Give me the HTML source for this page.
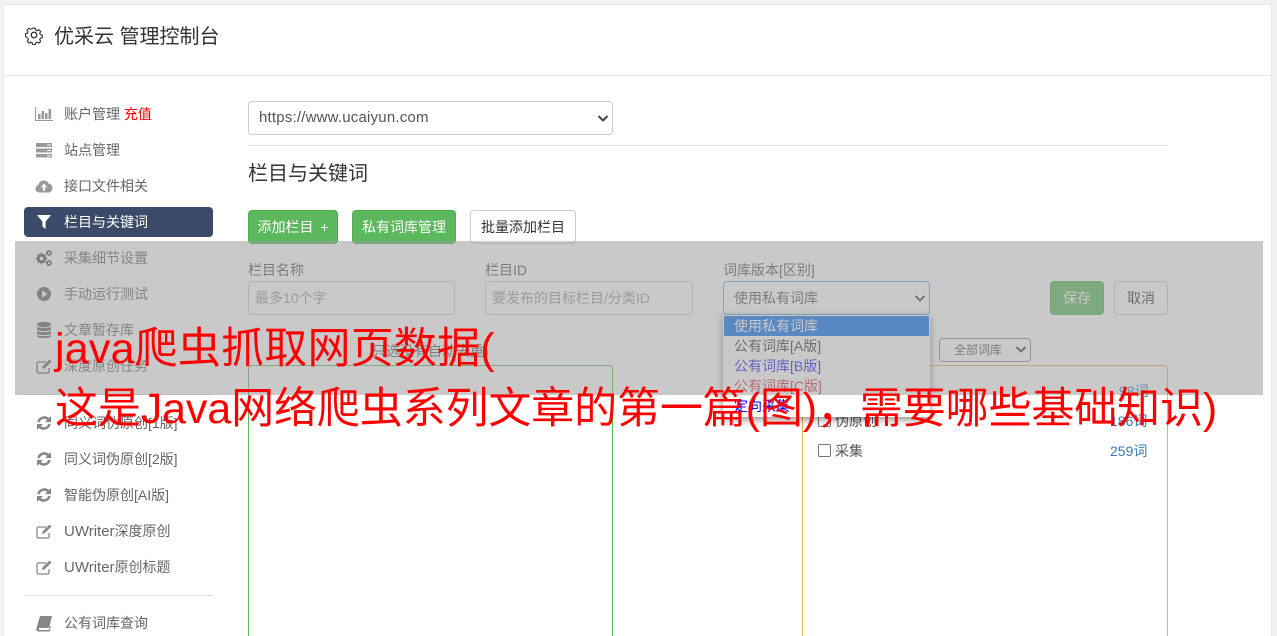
<!DOCTYPE html>
<html lang="zh"><head><meta charset="utf-8"><title>优采云 管理控制台</title>
<style>
html,body{margin:0;padding:0;width:1277px;height:636px;overflow:hidden}
body{background:#f1f1f1;font-family:"Liberation Sans","Noto Sans CJK SC",sans-serif;font-size:14px;color:#555}
#wrap{position:absolute;left:0;top:0;width:1277px;height:636px;overflow:hidden}
.a{position:absolute;white-space:nowrap}
.l{font-size:15px}
#card{left:3px;top:4px;width:1267px;height:640px;background:#fff;border:1px solid #e8e8e8;border-radius:3px}
.m{left:64px;height:20px;line-height:20px;color:#666}
.i{position:absolute;left:35px;width:18px;height:18px}
.hr{background:#e0e0e0;height:1px}
.box{box-sizing:border-box;border:1px solid #ccc;border-radius:4px;background:#fff}
.btn{box-sizing:border-box;height:34px;line-height:32px;text-align:center;border-radius:4px}
.g{background:#5cb85c;border:1px solid #4cae4c;color:#fff}
.w{background:#fff;border:1px solid #ccc;color:#333}
.lb{height:20px;line-height:20px;color:#555}
.in{box-sizing:border-box;height:34px;line-height:32px;padding-left:6px;color:#999}
.ch{position:absolute;left:818px;width:13px;height:13px;box-sizing:border-box;border:1px solid #767676;border-radius:2px;background:#fff}
.op{left:734px;height:20px;line-height:20px}
.big{left:55px;color:#f00;font-size:43px;height:60px;line-height:60px;z-index:5}
</style></head><body><div id="wrap">
<div class="a" id="card"></div>
<svg class="a" style="left:24px;top:25px" width="20" height="20" viewBox="0 0 20 20" fill="none" stroke="#333" stroke-width="1.300"><circle cx="10" cy="10" r="2.800"/><path d="M8.400 2h3.200l.5 2.300 1.600.7 2-1.200 2.200 2.200-1.200 2 .7 1.600 2.300.5v3.200l-2.300.5-.7 1.600 1.200 2-2.200 2.200-2-1.200-1.600.7-.5 2.300H8.400l-.5-2.300-1.600-.7-2 1.200-2.200-2.200 1.200-2-.7-1.600L0 11.600V8.400l2.300-.5.7-1.600-1.200-2 2.200-2.200 2 1.200 1.600-.7z" transform="translate(1.500 1.500) scale(.85)"/></svg>
<div class="a" style="left:54px;top:25px;height:24px;line-height:24px;font-size:20px;color:#333">优采云 管理控制台</div>
<div class="a hr" style="left:4px;top:75px;width:1267px;background:#e6e6e6"></div>

<svg class="i" style="top:105px" viewBox="0 0 18 18" fill="#999"><path d="M0 2h1v13h17v1H0z"/><rect x="3" y="9" width="2.500" height="5"/><rect x="6.500" y="6" width="2.500" height="8"/><rect x="10" y="8" width="2.500" height="6"/><rect x="13.500" y="4" width="2.500" height="10"/></svg>
<div class="a m" style="top:104px">账户管理 <span style="color:#f00">充值</span></div>
<svg class="i" style="top:141px" viewBox="0 0 18 18" fill="#999"><rect x="1" y="2" width="16" height="4"/><rect x="1" y="7.500" width="16" height="4"/><rect x="1" y="13" width="16" height="3.500"/><path d="M12 3.500h4v1h-4zM12 9h4v1h-4zM12 14.300h4v1h-4z" fill="#fff"/></svg>
<div class="a m" style="top:140px">站点管理</div>
<svg class="i" style="top:177px" viewBox="0 0 18 18"><path fill="#999" d="M4.500 15.500C2 15.500.5 13.800.5 11.800c0-1.800 1.200-3.100 2.700-3.500C3.700 5.500 6 3.500 8.800 3.500c2.300 0 4.200 1.300 5 3.300 2.200.2 3.700 2.200 3.700 4.300 0 2.500-1.900 4.400-4.200 4.400z"/><path fill="#fff" d="M9 6.500l3.300 3.700H10.200v3.300H7.800v-3.300H5.700z"/></svg>
<div class="a m" style="top:176px">接口文件相关</div>
<div class="a" style="left:24px;top:207px;width:189px;height:30px;background:#3a4a68;border-radius:4px"></div>
<svg class="i" style="top:213px" viewBox="0 0 18 18" fill="#fff"><path d="M2 2h14L10.600 8.600V16l-3.200-2.500V8.600z"/></svg>
<div class="a m" style="top:212px;color:#fff">栏目与关键词</div>
<svg class="i" style="top:249px" viewBox="0 0 18 18"><g fill="none" stroke="#555" stroke-linecap="butt"><circle cx="6.500" cy="9.500" r="3.300" stroke-width="2.800"/><path d="M6.500 3.800v11.400M.8 9.500h11.400M2.500 5.500l8 8M10.500 5.500l-8 8" stroke-width="1.500" stroke-dasharray="1.800 7.800"/><circle cx="14" cy="4" r="2" stroke-width="1.800"/><circle cx="14" cy="14" r="2" stroke-width="1.800"/></g></svg>
<div class="a m" style="top:248px">采集细节设置</div>
<svg class="i" style="top:285px" viewBox="0 0 18 18"><circle cx="9" cy="9" r="7" fill="#666"/><path d="M7 5.300l5.500 3.700L7 12.700z" fill="#fff"/></svg>
<div class="a m" style="top:284px">手动运行测试</div>
<svg class="i" style="top:321px" viewBox="0 0 18 18" fill="#666"><ellipse cx="9" cy="3.500" rx="7" ry="2.700"/><path d="M2 5.800c1.500 1.500 12.500 1.500 14 0v2.700c-1 2.200-13 2.200-14 0zM2 10c1.500 1.500 12.500 1.500 14 0v2.500c-1 2.200-13 2.200-14 0zM2 14c1.500 1.500 12.500 1.500 14 0v1c-1 2.800-13 2.800-14 0z"/></svg>
<div class="a m" style="top:320px">文章暂存库</div>
<svg class="i" style="top:357px" viewBox="0 0 18 18" fill="none" stroke="#666" stroke-width="1.300"><path d="M14 11v3.500a1.500 1.500 0 0 1-1.500 1.500h-9A1.500 1.500 0 0 1 2 14.500v-8A1.500 1.500 0 0 1 3.500 5H11"/><path d="M7 12l.7-2.800L14.500 2.500l2 2-6.800 6.800z" fill="#666" stroke="none"/></svg>
<div class="a m" style="top:356px">深度原创任务</div>
<div class="a hr" style="left:24px;top:394px;width:189px"></div>
<svg class="i" style="top:414px" viewBox="0 0 18 18"><g fill="none" stroke="#888" stroke-width="2.600"><path d="M3.500 8a5.800 5.800 0 0 1 10-2.500"/><path d="M14.500 10a5.800 5.800 0 0 1-10 2.500"/></g><path fill="#888" d="M16 2v6h-6zM2 16v-6h6z"/></svg>
<div class="a m" style="top:413px">同义词伪原创[1版]</div>
<svg class="i" style="top:450px" viewBox="0 0 18 18"><g fill="none" stroke="#888" stroke-width="2.600"><path d="M3.500 8a5.800 5.800 0 0 1 10-2.500"/><path d="M14.500 10a5.800 5.800 0 0 1-10 2.500"/></g><path fill="#888" d="M16 2v6h-6zM2 16v-6h6z"/></svg>
<div class="a m" style="top:449px">同义词伪原创[2版]</div>
<svg class="i" style="top:486px" viewBox="0 0 18 18"><g fill="none" stroke="#888" stroke-width="2.600"><path d="M3.500 8a5.800 5.800 0 0 1 10-2.500"/><path d="M14.500 10a5.800 5.800 0 0 1-10 2.500"/></g><path fill="#888" d="M16 2v6h-6zM2 16v-6h6z"/></svg>
<div class="a m" style="top:485px">智能伪原创[AI版]</div>
<svg class="i" style="top:522px" viewBox="0 0 18 18" fill="none" stroke="#888" stroke-width="1.300"><path d="M14 11v3.500a1.500 1.500 0 0 1-1.500 1.500h-9A1.500 1.500 0 0 1 2 14.500v-8A1.500 1.500 0 0 1 3.500 5H11"/><path d="M7 12l.7-2.800L14.500 2.500l2 2-6.800 6.800z" fill="#888" stroke="none"/></svg>
<div class="a m" style="top:521px"><span class="l">UWriter</span>深度原创</div>
<svg class="i" style="top:558px" viewBox="0 0 18 18" fill="none" stroke="#888" stroke-width="1.300"><path d="M14 11v3.500a1.500 1.500 0 0 1-1.500 1.500h-9A1.500 1.500 0 0 1 2 14.500v-8A1.500 1.500 0 0 1 3.500 5H11"/><path d="M7 12l.7-2.800L14.500 2.500l2 2-6.800 6.800z" fill="#888" stroke="none"/></svg>
<div class="a m" style="top:557px"><span class="l">UWriter</span>原创标题</div>
<div class="a hr" style="left:24px;top:595px;width:189px"></div>
<svg class="i" style="top:615px" viewBox="0 0 18 18" fill="#888"><path d="M5 1h12l-3 12H4.500c-.8 0-.8 2 0 2H14l.8-3.500 1.200-.5-1.500 5.500H3.500C1.500 16.500 1 14.500 1.500 13z"/></svg>
<div class="a m" style="top:613px">公有词库查询</div>

<div class="a box" style="left:248px;top:101px;width:365px;height:34px;line-height:32px;padding-left:10px;color:#555;font-size:15px;letter-spacing:.2px">https://www.ucaiyun.com</div>
<svg class="a" style="left:597px;top:114px" width="12" height="9" viewBox="0 0 12 9" fill="none" stroke="#444" stroke-width="2"><path d="M1.500 2l4.500 4.500L10.500 2"/></svg>
<div class="a hr" style="left:248px;top:145px;width:920px"></div>
<div class="a" style="left:248px;top:160px;height:28px;line-height:28px;font-size:20px;color:#333">栏目与关键词</div>

<div class="a btn g" style="left:248px;top:210px;width:90px;word-spacing:3px">添加栏目 +</div>
<div class="a btn g" style="left:352px;top:210px;width:104px">私有词库管理</div>
<div class="a btn w" style="left:470px;top:210px;width:106px">批量添加栏目</div>

<div class="a lb" style="left:248px;top:260px">栏目名称</div>
<div class="a box in" style="left:248px;top:281px;width:207px">最多10个字</div>
<div class="a lb" style="left:485px;top:260px">栏目ID</div>
<div class="a box in" style="left:485px;top:281px;width:208px">要发布的目标栏目/分类ID</div>
<div class="a lb" style="left:723px;top:260px">词库版本[区别]</div>
<div class="a box in" style="left:723px;top:281px;width:207px;border-color:#66afe9;color:#555;padding-left:10px">使用私有词库</div>
<svg class="a" style="left:914px;top:294px" width="12" height="9" viewBox="0 0 12 9" fill="none" stroke="#444" stroke-width="2"><path d="M1.500 2l4.500 4.500L10.500 2"/></svg>
<div class="a btn g" style="left:1050px;top:281px;width:54px">保存</div>
<div class="a btn w" style="left:1114px;top:281px;width:54px">取消</div>

<div class="a" style="left:372px;top:341px;height:20px;line-height:20px;color:#555">只选没有自动去重)</div>
<div class="a" style="left:248px;top:365px;width:365px;height:290px;box-sizing:border-box;border:1px solid #5cb85c;border-radius:4px"></div>
<div class="a" style="left:802px;top:365px;width:366px;height:290px;box-sizing:border-box;border:1px solid #f0ad4e;border-radius:4px"></div>
<div class="a box" style="left:939px;top:338px;width:92px;height:24px;line-height:22px;padding-left:14px;font-size:12px;border-color:#888;color:#555">全部词库</div>
<svg class="a" style="left:1015px;top:345px" width="12" height="9" viewBox="0 0 12 9" fill="none" stroke="#444" stroke-width="2"><path d="M1.500 2l4.500 4.500L10.500 2"/></svg>
<div class="ch" style="top:384px"></div>
<div class="a" style="left:835px;top:381px;height:20px;line-height:20px">原创</div>
<div class="a" style="left:1119px;top:381px;height:20px;line-height:20px;color:#337ab7">98词</div>
<div class="ch" style="top:414px"></div>
<div class="a" style="left:835px;top:411px;height:20px;line-height:20px">伪原创</div>
<div class="a" style="left:1110px;top:411px;height:20px;line-height:20px;color:#337ab7">186词</div>
<div class="ch" style="top:444px"></div>
<div class="a" style="left:835px;top:441px;height:20px;line-height:20px">采集</div>
<div class="a" style="left:1110px;top:441px;height:20px;line-height:20px;color:#337ab7">259词</div>

<div class="a" style="left:723px;top:315px;width:207px;height:102px;background:#fff;box-shadow:0 2px 8px rgba(0,0,0,.5)"></div>
<div class="a" style="left:724px;top:316px;width:205px;height:20px;background:#0a70f0"></div>
<div class="a op" style="top:316px;color:#fff">使用私有词库</div>
<div class="a op" style="top:336px;color:#333">公有词库[A版]</div>
<div class="a op" style="top:356px;color:#1a1ae6">公有词库[B版]</div>
<div class="a op" style="top:376px;color:#c8323c">公有词库[C版]</div>
<div class="a op" style="top:396px;color:#00f">定向采集</div>

<div class="a" style="left:15px;top:241px;width:1248px;height:154px;background:rgba(157,157,157,.55)"></div>
<div class="a big" style="top:319px;letter-spacing:.2px">java爬虫抓取网页数据(</div>
<div class="a big" style="top:379px;letter-spacing:-.12px">这是Java网络爬虫系列文章的第一篇(图)，需要哪些基础知识)</div>
</div></body></html>
